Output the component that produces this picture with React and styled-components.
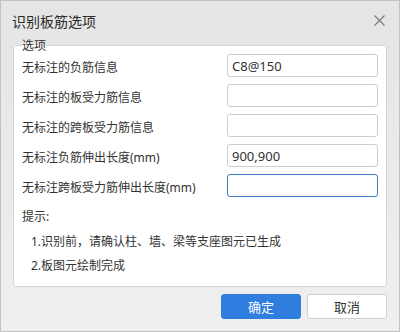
import React from 'react';
import styled, {createGlobalStyle} from 'styled-components';

const Global = createGlobalStyle`
  html, body {
    margin: 0;
    padding: 0;
    background: #ffffff;
  }
  * {
    box-sizing: border-box;
  }
`

const Dialog = styled.div`
  width: 400px;
  height: 332px;
  border: 1px solid #c2c2c2;
  background: linear-gradient(#e5e5e5, #efefef);
  display: flex;
  flex-direction: column;
  font-family: "Noto Sans", "Noto Sans CJK SC", sans-serif;
  color: #333;
`

const TitleBar = styled.div`
  height: 37px;
  flex: none;
  display: flex;
  align-items: center;
  justify-content: space-between;
  padding: 2px 12px 0 11px;
`

const Title = styled.div`
  font-size: 14px;
  font-family: "Noto Sans CJK SC", sans-serif;
  color: #2b2b2b;
`

const CloseButton = styled.button`
  width: 14px;
  height: 14px;
  padding: 0;
  border: none;
  background: none;
  display: flex;
  align-items: center;
  justify-content: center;
  margin-right: 1px;
`

const Group = styled.fieldset`
  flex: 1;
  min-height: 0;
  margin: 0 12px;
  padding: 2px 8px 0;
  border: 1px solid #d4d4d4;
  border-radius: 3px;
  background: #fff;
`

const Legend = styled.legend`
  padding: 0;
  font-size: 12px;
  line-height: 14px;
  font-family: "Noto Sans CJK SC", sans-serif;
  color: #333;
`

const Form = styled.div`
  display: grid;
  grid-template-columns: 1fr 151px;
  grid-auto-rows: 23px;
  row-gap: 7px;
  align-items: center;
`

const Label = styled.div`
  font-size: 12px;
  padding-top: 2px;
  white-space: nowrap;
`

const Input = styled.input`
  width: 151px;
  height: 23px;
  border: 1px solid ${p => (p.$focused ? '#3d7bc6' : '#cdcdcd')};
  border-radius: 3px;
  padding: 0 4px;
  font-size: 13px;
  font-family: "Noto Sans", sans-serif;
  color: #333;
  background: #fff;
  outline: none;
`

const Tips = styled.div`
  margin-top: 8px;
  font-size: 12px;
  line-height: 24.5px;
`

const TipLine = styled.div`
  padding-left: ${p => p.$indent || 0}px;
`

const Footer = styled.div`
  flex: none;
  display: flex;
  justify-content: flex-end;
  gap: 6px;
  padding: 7px 12px 12px;
`

const Button = styled.button`
  width: 80px;
  height: 25px;
  border-radius: 3px;
  font-size: 13px;
  font-family: "Noto Sans CJK SC", sans-serif;
  border: 1px solid ${p => (p.$primary ? '#2f7ddf' : '#cfcfcf')};
  background: ${p => (p.$primary ? '#2f7ddf' : '#fff')};
  color: ${p => (p.$primary ? '#fff' : '#333')};
  padding: 0;
`

const fields = [
  {label: '无标注的负筋信息', value: 'C8@150'},
  {label: '无标注的板受力筋信息', value: ''},
  {label: '无标注的跨板受力筋信息', value: ''},
  {label: '无标注负筋伸出长度(mm)', value: '900,900'},
  {label: '无标注跨板受力筋伸出长度(mm)', value: '', focused: true},
];

const App = () => {
  return (
    <>
      <Global />
      <Dialog>
        <TitleBar>
          <Title>识别板筋选项</Title>
          <CloseButton>
            <svg width="11" height="11" viewBox="0 0 11 11">
              <path d="M0.5 0.5 L10.5 10.5 M10.5 0.5 L0.5 10.5" stroke="#7a7a7a" strokeWidth="1.2" fill="none" />
            </svg>
          </CloseButton>
        </TitleBar>
        <Group>
          <Legend>选项</Legend>
          <Form>
            {fields.map(f => (
              <React.Fragment key={f.label}>
                <Label>{f.label}</Label>
                <Input defaultValue={f.value} $focused={f.focused} />
              </React.Fragment>
            ))}
          </Form>
          <Tips>
            <TipLine>提示:</TipLine>
            <TipLine $indent={9}>1.识别前，请确认柱、墙、梁等支座图元已生成</TipLine>
            <TipLine $indent={9}>2.板图元绘制完成</TipLine>
          </Tips>
        </Group>
        <Footer>
          <Button $primary>确定</Button>
          <Button>取消</Button>
        </Footer>
      </Dialog>
    </>
  );
};

export default App;
